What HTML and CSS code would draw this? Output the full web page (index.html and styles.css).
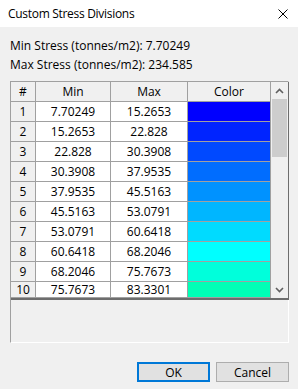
FILE: index.html
```html
<!DOCTYPE html>
<html lang="en">
<head>
    <meta charset="UTF-8">
    <title>Custom Stress Divisions</title>
    <link rel="stylesheet" href="styles.css">
</head>
<body>
    <div class="dialog">
        <div class="titlebar">
            <span class="title">Custom Stress Divisions</span>
            <svg class="close" width="10" height="10" viewBox="0 0 10 10">
                <path d="M0.5 0.5 L9.5 9.5 M9.5 0.5 L0.5 9.5" stroke="#000" stroke-width="1" fill="none"/>
            </svg>
        </div>

        <div class="content">
            <div class="info">
                <div class="info_line">Min Stress (tonnes/m2): 7.70249</div>
                <div class="info_line">Max Stress (tonnes/m2): 234.585</div>
            </div>

            <div class="panel">
                <div class="grid_box">
                    <div class="grid">
                        <div class="cell head">#</div>
                        <div class="cell head">Min</div>
                        <div class="cell head">Max</div>
                        <div class="cell head">Color</div>

                        <div class="cell head">1</div>
                        <div class="cell">7.70249</div>
                        <div class="cell">15.2653</div>
                        <div class="cell swatch" style="background:#0000ff"></div>

                        <div class="cell head">2</div>
                        <div class="cell">15.2653</div>
                        <div class="cell">22.828</div>
                        <div class="cell swatch" style="background:#0024ff"></div>

                        <div class="cell head">3</div>
                        <div class="cell">22.828</div>
                        <div class="cell">30.3908</div>
                        <div class="cell swatch" style="background:#0049ff"></div>

                        <div class="cell head">4</div>
                        <div class="cell">30.3908</div>
                        <div class="cell">37.9535</div>
                        <div class="cell swatch" style="background:#006dff"></div>

                        <div class="cell head">5</div>
                        <div class="cell">37.9535</div>
                        <div class="cell">45.5163</div>
                        <div class="cell swatch" style="background:#0092ff"></div>

                        <div class="cell head">6</div>
                        <div class="cell">45.5163</div>
                        <div class="cell">53.0791</div>
                        <div class="cell swatch" style="background:#00b6ff"></div>

                        <div class="cell head">7</div>
                        <div class="cell">53.0791</div>
                        <div class="cell">60.6418</div>
                        <div class="cell swatch" style="background:#00dbff"></div>

                        <div class="cell head">8</div>
                        <div class="cell">60.6418</div>
                        <div class="cell">68.2046</div>
                        <div class="cell swatch" style="background:#00ffff"></div>

                        <div class="cell head">9</div>
                        <div class="cell">68.2046</div>
                        <div class="cell">75.7673</div>
                        <div class="cell swatch" style="background:#00ffdb"></div>

                        <div class="cell head">10</div>
                        <div class="cell">75.7673</div>
                        <div class="cell">83.3301</div>
                        <div class="cell swatch" style="background:#00ffb6"></div>
                    </div>

                    <div class="scrollbar">
                        <div class="sb_btn">
                            <svg width="9" height="6" viewBox="0 0 9 6">
                                <polyline points="1,5 4.5,1.5 8,5" stroke="#606060" stroke-width="1.6" fill="none"/>
                            </svg>
                        </div>
                        <div class="sb_track">
                            <div class="sb_thumb"></div>
                        </div>
                        <div class="sb_btn">
                            <svg width="9" height="6" viewBox="0 0 9 6">
                                <polyline points="1,1 4.5,4.5 8,1" stroke="#606060" stroke-width="1.6" fill="none"/>
                            </svg>
                        </div>
                    </div>
                </div>
            </div>

            <div class="buttons">
                <button class="btn btn_default">OK</button>
                <button class="btn">Cancel</button>
            </div>
        </div>
    </div>
</body>
</html>
```

FILE: styles.css
```css
body {
    margin: 0;
    background-color: #f0f0f0;
    font-family: "Open Sans", "Noto Sans", sans-serif;
    font-size: 12px;
    color: #000;
}

.dialog {
    width: 298px;
    height: 389px;
    overflow: hidden;
}

.titlebar {
    height: 27px;
    background-color: #fff;
    display: flex;
    align-items: center;
    justify-content: space-between;
    padding: 0 10px 0 8px;
}

.title {
    font-size: 12px;
    letter-spacing: -0.3px;
}

.content {
    padding: 9px 9px 0 10px;
}

.info_line {
    line-height: 19px;
    height: 19px;
}

.panel {
    margin-top: 7px;
    height: 262px;
    box-sizing: border-box;
    border-left: 1px solid #a0a0a0;
    border-top: 1px solid #a0a0a0;
    border-right: 1px solid #fff;
    border-bottom: 1px solid #fff;
}

.grid_box {
    display: flex;
    margin-right: -1px;
    border-right: 1px solid #6d6d6d;
    border-bottom: 2px solid #6d6d6d;
}

.grid {
    display: grid;
    grid-template-columns: 25px 75px 77px 83px;
    grid-template-rows: repeat(10, 20px) 16px;
    height: 216px;
    overflow: hidden;
    background-color: #fff;
}

.cell {
    box-sizing: border-box;
    border-right: 1px solid #a0a0a0;
    border-bottom: 1px solid #a0a0a0;
    display: flex;
    align-items: center;
    justify-content: center;
    white-space: nowrap;
    line-height: 14px;
}

.head {
    background-color: #f0f0f0;
}

.scrollbar {
    width: 17px;
    height: 216px;
    display: flex;
    flex-direction: column;
    background-color: #f0f0f0;
}

.sb_btn {
    height: 17px;
    display: flex;
    align-items: center;
    justify-content: center;
}

.sb_track {
    flex: 1;
}

.sb_thumb {
    height: 58px;
    margin: 0 1px;
    background-color: #cdcdcd;
}

.buttons {
    display: flex;
    justify-content: flex-end;
    gap: 6px;
    margin-top: 19px;
}

.btn {
    width: 73px;
    height: 20px;
    box-sizing: border-box;
    padding: 0;
    font-family: inherit;
    font-size: 12px;
    color: #000;
    background-color: #e1e1e1;
    border: 1px solid #adadad;
}

.btn_default {
    border: 2px solid #0078d7;
}
```
